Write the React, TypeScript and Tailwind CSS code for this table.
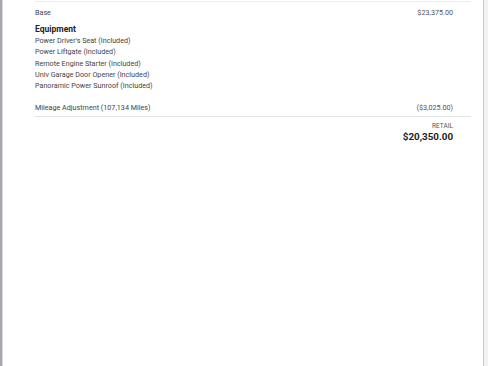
const equipment = [
  "Power Driver's Seat (Included)",
  "Power Liftgate (Included)",
  "Remote Engine Starter (Included)",
  "Univ Garage Door Opener (Included)",
  "Panoramic Power Sunroof (Included)",
];

export default function App() {
  return (
    <div className="flex h-[366px] w-[488px] overflow-hidden bg-white font-['Roboto',sans-serif] text-[#444]">
      <div className="w-[2px] bg-[#a7a7ae]" />
      <div className="w-px bg-[#d8d8dc]" />
      <div className="flex-1 border-r border-[#c9c9c9] pl-[32px] pr-[12px]">
        <div className="border-t border-[#ececec] mt-px" />
        <div className="flex items-center justify-between pr-[18px] pt-[5px] text-[7.2px] leading-[11px]">
          <span>Base</span>
          <span className="text-[#555]">$23,375.00</span>
        </div>
        <div className="mt-[6px] text-[8.5px] font-bold leading-[11px] text-[#222]">Equipment</div>
        <ul className="text-[7.2px] leading-[11.3px]">
          {equipment.map((item) => (
            <li key={item}>{item}</li>
          ))}
        </ul>
        <div className="mt-[11px] flex items-center justify-between pb-[3px] pr-[18px] text-[7.2px] leading-[11px]">
          <span>Mileage Adjustment (107,134 Miles)</span>
          <span className="text-[#555]">($3,025.00)</span>
        </div>
        <div className="border-t border-[#e4e4e4]" />
        <div className="flex flex-col items-end pr-[18px] pt-[5px]">
          <span className="text-[6.5px] leading-[9px] text-[#555]">RETAIL</span>
          <span className="text-[9.8px] font-bold leading-[11px] text-[#222]">$20,350.00</span>
        </div>
      </div>
      <div className="w-[4px] bg-[#f3f3f3]" />
    </div>
  );
}
